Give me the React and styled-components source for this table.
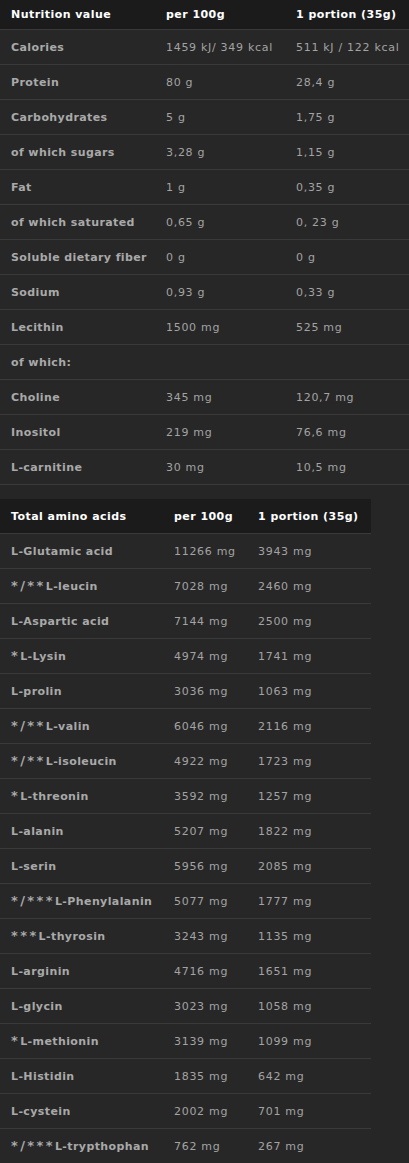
import React from "react";
import styled, { createGlobalStyle } from "styled-components";

const Global = createGlobalStyle`
  html, body { margin: 0; padding: 0; background: #262626; }
  body { font-family: "DejaVu Sans", Verdana, sans-serif; font-size: 11px; }
`;

const Page = styled.div`
  width: 409px;
  background: #262626;
  padding-bottom: 2px;
`;

const Table = styled.div`
  width: ${(p) => p.$width}px;
  margin-top: ${(p) => p.$top || 0}px;
`;

const Row = styled.div`
  display: grid;
  grid-template-columns: ${(p) => p.$cols};
  align-items: center;
  height: ${(p) => p.$h}px;
  background: ${(p) => (p.$head ? "#1b1b1b" : "#272727")};
  border-bottom: 1px solid #3a3a3a;
  padding-left: 11px;
`;

const Label = styled.div`
  font-weight: bold;
  color: #a9a9a9;
  font-size: 11px;
  letter-spacing: 0.4px;
  white-space: nowrap;
`;

const Marks = styled.span`
  font-size: 13px;
  letter-spacing: 2.4px;
  line-height: 1;
`;

const Value = styled.div`
  color: #a3a3a3;
  font-size: 11px;
  letter-spacing: 0.7px;
  white-space: nowrap;
`;

const HeadCell = styled.div`
  font-weight: bold;
  color: #ffffff;
  font-size: 11px;
  letter-spacing: 0.45px;
  white-space: nowrap;
`;

const nutrition = [
  ["Calories", "1459 kJ/ 349 kcal", "511 kJ / 122 kcal"],
  ["Protein", "80 g", "28,4 g"],
  ["Carbohydrates", "5 g", "1,75 g"],
  ["of which sugars", "3,28 g", "1,15 g"],
  ["Fat", "1 g", "0,35 g"],
  ["of which saturated", "0,65 g", "0, 23 g"],
  ["Soluble dietary fiber", "0 g", "0 g"],
  ["Sodium", "0,93 g", "0,33 g"],
  ["Lecithin", "1500 mg", "525 mg"],
  ["of which:", "", ""],
  ["Choline", "345 mg", "120,7 mg"],
  ["Inositol", "219 mg", "76,6 mg"],
  ["L-carnitine", "30 mg", "10,5 mg"],
];

const amino = [
  ["L-Glutamic acid", "11266 mg", "3943 mg"],
  ["*/**L-leucin", "7028 mg", "2460 mg"],
  ["L-Aspartic acid", "7144 mg", "2500 mg"],
  ["*L-Lysin", "4974 mg", "1741 mg"],
  ["L-prolin", "3036 mg", "1063 mg"],
  ["*/**L-valin", "6046 mg", "2116 mg"],
  ["*/**L-isoleucin", "4922 mg", "1723 mg"],
  ["*L-threonin", "3592 mg", "1257 mg"],
  ["L-alanin", "5207 mg", "1822 mg"],
  ["L-serin", "5956 mg", "2085 mg"],
  ["*/***L-Phenylalanin", "5077 mg", "1777 mg"],
  ["***L-thyrosin", "3243 mg", "1135 mg"],
  ["L-arginin", "4716 mg", "1651 mg"],
  ["L-glycin", "3023 mg", "1058 mg"],
  ["*L-methionin", "3139 mg", "1099 mg"],
  ["L-Histidin", "1835 mg", "642 mg"],
  ["L-cystein", "2002 mg", "701 mg"],
  ["*/***L-trypthophan", "762 mg", "267 mg"],
];

const cols1 = "155px 130px 1fr";
const cols2 = "163px 84px 1fr";

function LabelText({ text }) {
  const m = text.match(/^([*/]+)(.*)$/);
  if (!m) return <Label>{text}</Label>;
  return (
    <Label>
      <Marks>{m[1]}</Marks>
      {m[2]}
    </Label>
  );
}

export default function App() {
  return (
    <Page>
      <Global />
      <Table $width={409}>
        <Row $head $cols={cols1} $h={29}>
          <HeadCell>Nutrition value</HeadCell>
          <HeadCell>per 100g</HeadCell>
          <HeadCell>1 portion (35g)</HeadCell>
        </Row>
        {nutrition.map(([a, b, c]) => (
          <Row key={a} $cols={cols1} $h={34}>
            <LabelText text={a} />
            <Value>{b}</Value>
            <Value>{c}</Value>
          </Row>
        ))}
      </Table>
      <Table $width={371} $top={14}>
        <Row $head $cols={cols2} $h={34}>
          <HeadCell>Total amino acids</HeadCell>
          <HeadCell>per 100g</HeadCell>
          <HeadCell>1 portion (35g)</HeadCell>
        </Row>
        {amino.map(([a, b, c]) => (
          <Row key={a} $cols={cols2} $h={34}>
            <LabelText text={a} />
            <Value>{b}</Value>
            <Value>{c}</Value>
          </Row>
        ))}
      </Table>
    </Page>
  );
}
